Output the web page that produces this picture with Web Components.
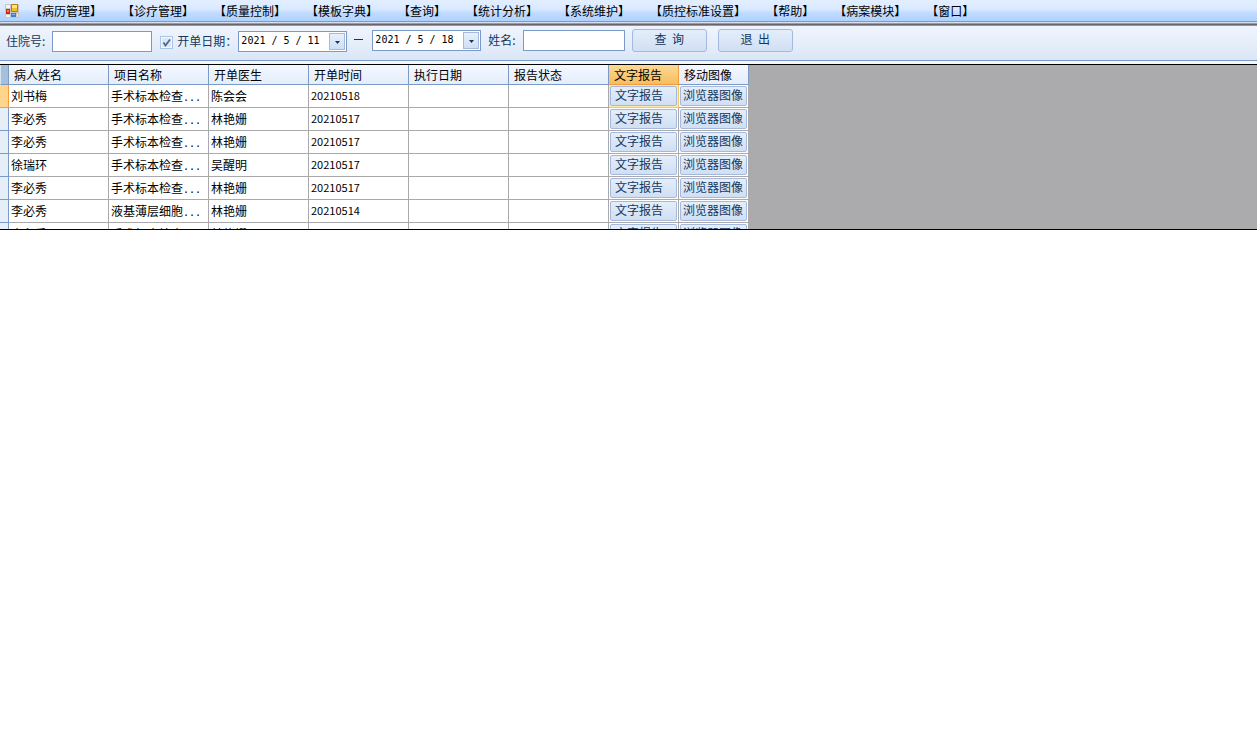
<!DOCTYPE html>
<html lang="zh-CN">
<head>
<meta charset="utf-8">
<title>病历管理</title>
<style>
html,body{margin:0;background:#fff}
body{font:12px/16px "DejaVu Sans Mono","Noto Sans CJK SC",sans-serif;color:#000}
</style>
</head>
<body>
<record-app></record-app>
<script>
const define = (name, html, setup) => customElements.define(name, class extends HTMLElement {
  constructor() {
    super();
    const t = document.createElement('template');
    t.innerHTML = html;
    this.attachShadow({ mode: 'open' }).append(t.content.cloneNode(true));
  }
  connectedCallback() {
    if (setup && !this.ready) { this.ready = true; setup(this, this.shadowRoot); }
  }
});
const FONT = 'font-family:"Noto Sans CJK SC",sans-serif;';

define('menu-item', `<style>
:host{display:block}
a{${FONT}font-size:12px;line-height:20px;color:#000;text-decoration:none;white-space:nowrap}
</style><a href="#"><slot></slot></a>`);

define('menu-bar', `<style>
:host{display:block;background:linear-gradient(#e3efff,#d9e9ff 45%,#c2dcff 60%,#aed2ff);border-bottom:1px solid #6f9dd9}
nav{display:flex;align-items:center;gap:20px;padding-left:4px;height:21px}
svg{display:block;width:16px;height:16px;margin-right:-10px}
</style><nav>
<svg viewBox="0 0 16 16" aria-hidden="true">
<path d="M1 1H15V15H1Z" fill="#c9c5c0"/>
<path d="M2 2H6V5H2ZM2 12H6V14H2ZM13 11H14V14H13Z" fill="#f4f4f2"/>
<path d="M7.500 1.500H13.500V8.500H7.500Z" fill="#f5bd20" stroke="#b97b10"/><path d="M8 2H13V5H8Z" fill="#ffe893"/>
<path d="M2 6H6V11H2Z" fill="#cf2b18"/><path d="M3 7H5V9H3Z" fill="#f17b5e"/>
<path d="M7 10H12V14H7Z" fill="#397ee5"/><path d="M8 11H11V12H8Z" fill="#83b5ff"/>
</svg><slot></slot></nav>`);

define('text-field', `<style>
:host{display:flex;align-items:center;gap:7px}
label{${FONT}font-size:12px;line-height:16px;color:#15375c;white-space:nowrap}
input{box-sizing:border-box;width:var(--field-width,100px);height:21px;margin:0;padding:0 3px;border:1px solid #7a9bc8;background:#fff;font:12px "DejaVu Sans Mono",monospace;outline:0}
</style><label for="f"><slot></slot></label><input id="f" type="text">`);

define('check-field', `<style>
:host{display:flex;align-items:center;gap:4px}
label{${FONT}font-size:12px;line-height:16px;color:#15375c;white-space:nowrap}
input{appearance:none;box-sizing:border-box;width:13px;height:13px;margin:0;border:1px solid #a9c5e8;background:#dfe6f0;box-shadow:inset 0 0 0 1px #f4f8fd}
span{display:grid;margin-top:2px}
span>*{grid-area:1/1}
svg{width:13px;height:13px;pointer-events:none}
</style><span><input id="c" type="checkbox" checked><svg viewBox="0 0 13 13" aria-hidden="true"><path d="M3.500 6.500L5.500 9.500L10 3.500" fill="none" stroke="#4a6797" stroke-width="1.800"/></svg></span><label for="c"><slot></slot></label>`);

define('date-field', `<style>
:host{display:block}
div{box-sizing:border-box;display:flex;align-items:center;width:109px;height:21px;padding:1px 0 1px 2px;border:1px solid #7a9bc8;background:#fff}
input{flex:1;min-width:0;height:16px;padding:0;border:0;background:none;font:10px/16px "DejaVu Sans Mono",monospace;color:#000;outline:0}
button{box-sizing:border-box;display:grid;place-items:center;width:16px;height:17px;margin:0 1px 0 0;padding:2px 0 0;border:1px solid #a7b8dd;background:linear-gradient(#e8f0fb,#cfdff4)}
svg{width:5px;height:3px}
</style><div><input type="text"><button type="button" aria-label="选择日期"><svg viewBox="0 0 5 3" aria-hidden="true"><path d="M0 0H5L2.500 3Z" fill="#15375c"/></svg></button></div>`,
(el, root) => {
  const i = root.querySelector('input');
  i.value = el.getAttribute('value');
  i.setAttribute('aria-label', el.getAttribute('label'));
});

define('tool-button', `<style>
:host{display:block}
button{box-sizing:border-box;width:75px;height:23px;margin:0;padding:0 0 2px;border:1px solid #a7b8dd;border-radius:3px;background:linear-gradient(#e4eefb,#d0dff3);${FONT}font-size:12px;line-height:16px;color:#15375c;white-space:pre}
</style><button type="button"><slot></slot></button>`);

define('query-bar', `<style>
:host{display:block;border-top:1px solid #d5dfee;background:linear-gradient(#9a9aa2,#9a9aa2 1px,#6a6468 1px)}
.rule{height:2px;border-bottom:1px solid #7a9bc8}
form{display:flex;align-items:center;height:30px;margin:0;padding:0 0 4px 6px;border-bottom:1px solid #7a9bc8;background:linear-gradient(#eff5ff,#e6eefa 50%,#dae6f6)}
.check{margin:0 1px 0 8px}
.dash{width:9px;height:1px;margin:0 9px 4px 7px;background:#15375c}
.to,.go{margin-bottom:2px}
.name{margin:0 7px 2px;--field-width:102px}
.leave{margin-left:11px}
</style><div class="rule"></div><form>
<text-field>住院号:</text-field>
<check-field class="check">开单日期：</check-field>
<date-field label="开始日期" value="2021 / 5 / 11"></date-field>
<span class="dash"></span>
<date-field class="to" label="结束日期" value="2021 / 5 / 18"></date-field>
<text-field class="name">姓名:</text-field>
<tool-button class="go">查&nbsp; 询</tool-button>
<tool-button class="go leave">退&nbsp; 出</tool-button>
</form>`);

define('report-grid', `<style>
:host{display:block;height:164px;margin-top:3px;border-top:1px solid #000;border-bottom:1px solid #000;background:#abaaad;overflow:hidden}
table{width:749px;table-layout:fixed;border-collapse:separate;border-spacing:0;background:#fff}
.mark{width:9px}.wide{width:100px}.action{width:70px}
th,td{box-sizing:border-box;padding:0;font-weight:400;text-align:left;white-space:nowrap;overflow:hidden;font-size:12px;line-height:16px}
thead th{height:20px;padding-left:5px;border-right:1px solid #7a9bc8;border-bottom:1px solid #7a9bc8;background:linear-gradient(#f4f8ff,#e4edfb);${FONT}}
thead th.corner{padding:0;background:#a6c0dc;border-left:1px solid #d5e3f3}
thead th.on{background:linear-gradient(#fbd995,#f6bd5e);border-color:#f59b3c}
tbody td{height:23px;padding-left:2px;border-right:1px solid #aaa9ab;border-bottom:1px solid #aaa9ab;${FONT}}
tbody th{height:23px;border-right:1px solid #7a9bc8;border-bottom:1px solid #7a9bc8;background:#e6eef7}
tbody tr:first-child th{background:#ffd58c;border-color:#f59b3c}
tbody td.num{font-size:11px;padding-bottom:2px}
.dots{font:10px/10px "DejaVu Sans Mono",monospace}
tbody td.cell{padding:1px}
button{box-sizing:border-box;display:block;width:100%;height:20px;margin:0;padding:0 0 2px 2px;border:1px solid #a7b8dd;border-radius:2px;background:linear-gradient(#e4eefb,#d0dff3);${FONT}font-size:12px;line-height:16px;color:#15375c;text-align:left;white-space:nowrap}
button.text{padding-left:4px}
tbody tr:first-child td.picked{background:#ffe9a8;border-color:#f3c869}
</style><table>
<colgroup><col class="mark"><col class="wide"><col class="wide"><col class="wide"><col class="wide"><col class="wide"><col class="wide"><col class="action"><col class="action"></colgroup>
<thead><tr><th class="corner"></th><th>病人姓名</th><th>项目名称</th><th>开单医生</th><th>开单时间</th><th>执行日期</th><th>报告状态</th><th class="on">文字报告</th><th>移动图像</th></tr></thead>
<tbody></tbody></table>`,
(el, root) => {
  const rows = [
    ['刘书梅', '手术标本检查', '陈会会', '20210518'],
    ['李必秀', '手术标本检查', '林艳姗', '20210517'],
    ['李必秀', '手术标本检查', '林艳姗', '20210517'],
    ['徐瑞环', '手术标本检查', '吴醒明', '20210517'],
    ['李必秀', '手术标本检查', '林艳姗', '20210517'],
    ['李必秀', '液基薄层细胞', '林艳姗', '20210514'],
    ['李必秀', '手术标本检查', '林艳姗', '20210514']
  ];
  root.querySelector('tbody').innerHTML = rows.map(([name, item, doctor, date]) =>
    `<tr><th></th><td>${name}</td><td>${item}<span class="dots">...</span></td><td>${doctor}</td><td class="num">${date}</td><td></td><td></td><td class="cell picked"><button class="text">文字报告</button></td><td class="cell"><button>浏览器图像</button></td></tr>`).join('');
});

define('record-app', `<style>:host{display:block}main{background:#f6f6fa}</style>
<menu-bar>
<menu-item>【病历管理】</menu-item><menu-item>【诊疗管理】</menu-item><menu-item>【质量控制】</menu-item><menu-item>【模板字典】</menu-item><menu-item>【查询】</menu-item><menu-item>【统计分析】</menu-item><menu-item>【系统维护】</menu-item><menu-item>【质控标准设置】</menu-item><menu-item>【帮助】</menu-item><menu-item>【病案模块】</menu-item><menu-item>【窗口】</menu-item>
</menu-bar>
<main><query-bar></query-bar><report-grid></report-grid></main>`);
</script>
</body>
</html>
